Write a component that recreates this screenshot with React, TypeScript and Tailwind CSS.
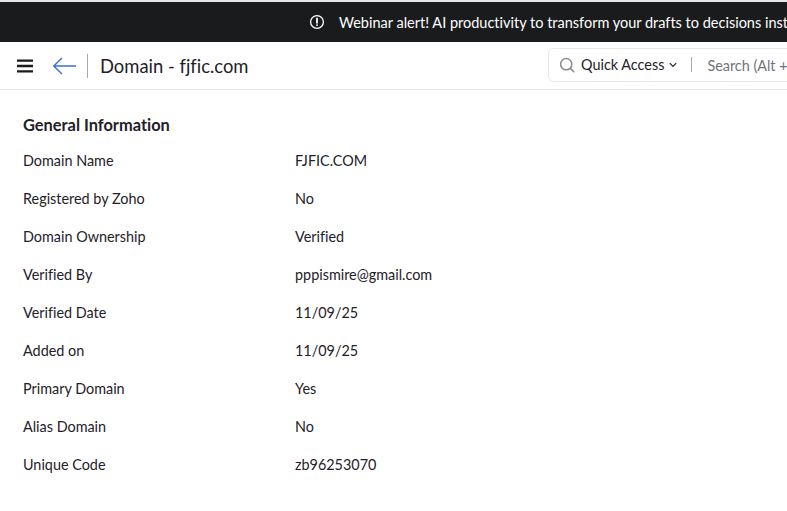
const rows = [
  ["Domain Name", "FJFIC.COM"],
  ["Registered by Zoho", "No"],
  ["Domain Ownership", "Verified"],
  ["Verified By", "pppismire@gmail.com"],
  ["Verified Date", "11/09/25"],
  ["Added on", "11/09/25"],
  ["Primary Domain", "Yes"],
  ["Alias Domain", "No"],
  ["Unique Code", "zb96253070"],
];

export default function App() {
  return (
    <div className="h-[511px] w-[787px] overflow-hidden bg-white font-['Lato',sans-serif] text-[#1f2128] [font-variant-ligatures:none]">
      {/* Banner */}
      <div className="h-[2px] bg-[#e6e6e6]" />
      <div className="flex h-[40px] items-center whitespace-nowrap bg-[#1a1b1d] pl-[309px] text-[14.5px] text-white">
        <svg width="16" height="16" viewBox="0 0 16 16" fill="none" stroke="currentColor" strokeWidth="1.3" className="shrink-0">
          <circle cx="8" cy="8" r="6.4" />
          <path d="M8 4.4v4.4" strokeWidth="1.8" strokeLinecap="round" />
          <circle cx="8" cy="11.2" r="0.9" fill="currentColor" stroke="none" />
        </svg>
        <span className="ml-[14px] translate-y-px">Webinar alert! AI productivity to transform your drafts to decisions instantly</span>
      </div>

      {/* Header */}
      <div className="flex h-[48px] items-center border-b border-[#e6e6e6] pl-[17px]">
        <svg width="16" height="14" viewBox="0 0 16 14" className="shrink-0" stroke="#1a1b1d" strokeWidth="2.4">
          <path d="M0 1.6h16M0 7h16M0 12.4h16" />
        </svg>
        <svg width="24" height="18" viewBox="0 0 24 18" fill="none" stroke="#3f6fd8" strokeWidth="1.4" className="ml-[20px] shrink-0">
          <path d="M0.8 9H23M9 1 0.8 9 9 17" />
        </svg>
        <div className="ml-[10px] h-[24px] w-px bg-[#a8a8a8]" />
        <h1 className="ml-[12px] translate-y-px text-[18.4px] leading-none">Domain - fjfic.com</h1>
        <div className="ml-auto flex h-[34px] w-[260px] shrink-0 translate-x-[21px] -translate-y-px items-center whitespace-nowrap rounded-[6px] border border-[#e8e8e8] pl-[10px]">
          <svg width="16" height="16" viewBox="0 0 16 16" fill="none" stroke="#8a8a8a" strokeWidth="1.5" className="shrink-0">
            <circle cx="7.2" cy="7.2" r="5.6" />
            <path d="m11.4 11.4 3.4 3.4" strokeLinecap="round" />
          </svg>
          <span className="ml-[6px] text-[14.4px]">Quick Access</span>
          <svg width="8" height="6" viewBox="0 0 8 6" fill="none" stroke="#1f2128" strokeWidth="1.2" className="ml-[5px] shrink-0">
            <path d="m0.8 1.2 3.2 3.2 3.2-3.2" />
          </svg>
          <div className="ml-[14px] h-[15px] w-px bg-[#a8a8a8]" />
          <span className="ml-[15px] translate-y-px text-[14.4px] text-[#70747c]">Search (Alt + /)</span>
        </div>
      </div>

      {/* General information */}
      <div className="pl-[23px] pt-[25px]">
        <h2 className="text-[16.4px] font-bold leading-[20px]">General Information</h2>
        <div className="mt-[7px] grid grid-cols-[272px_1fr] text-[14.4px] leading-[38px]">
          {rows.map(([label, value]) => (
            <div key={label} className="col-span-2 grid grid-cols-subgrid">
              <span>{label}</span>
              <span>{value}</span>
            </div>
          ))}
        </div>
      </div>
    </div>
  );
}
